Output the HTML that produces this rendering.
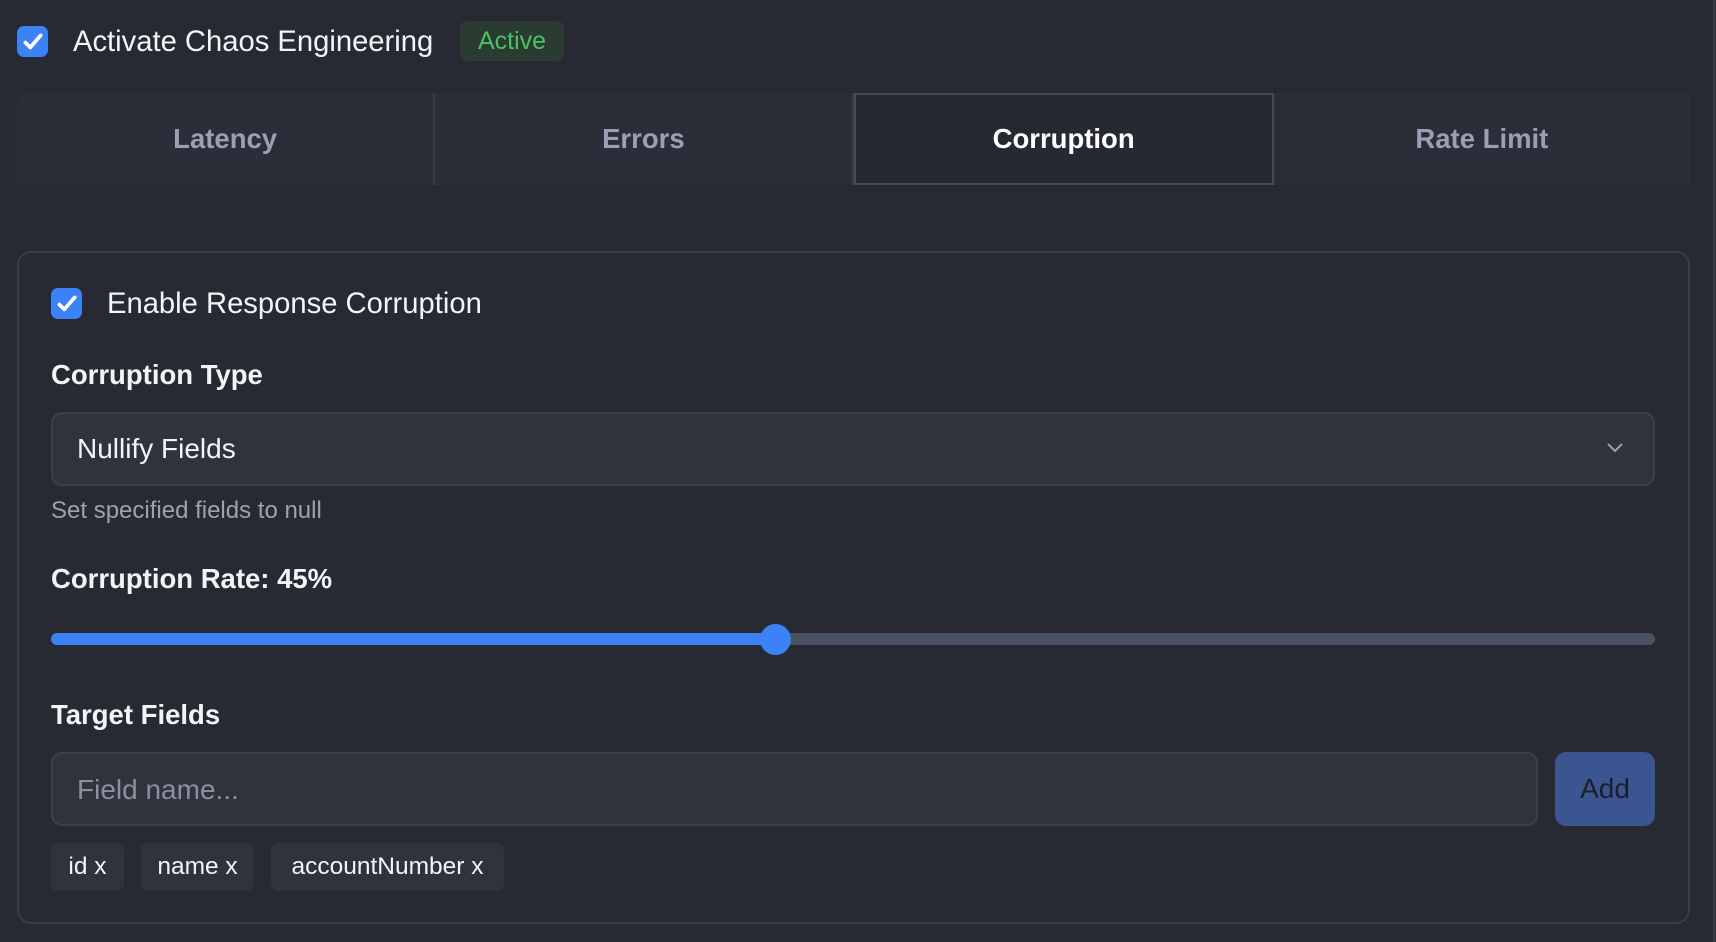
<!DOCTYPE html>
<html><head><style>
*{box-sizing:border-box;margin:0;padding:0}
body{width:1716px;height:942px;background:#272a33;font-family:"Liberation Sans",sans-serif;color:#f3f4f6;position:relative;overflow:hidden}
.abs{position:absolute}
.cb{width:31px;height:31px;border-radius:7px;background:#3b82f6;display:flex;align-items:center;justify-content:center}
.lbl{font-size:27.5px;font-weight:bold;color:#f3f4f6}
.tabs{left:17px;top:93px;width:1673px;height:92px;background:#2b2e38;border-radius:8px 8px 0 0;display:flex}
.tab{flex:1;display:flex;align-items:center;justify-content:center;font-size:27.5px;font-weight:bold;color:#98a1b3;border-right:2px solid #383c48}
.tab:last-child{border-right:none}
.tab.act{background:#262932;border:2px solid #454a58;color:#fff}
.card{left:17px;top:251px;width:1673px;height:673px;border:2px solid #393d49;border-radius:14px}
.field{background:#2f333e;border:2px solid #3c404c;border-radius:11px}
.tag{top:843px;height:48px;background:#2f333e;border-radius:7px;font-size:24.5px;display:flex;align-items:center;justify-content:center;color:#f3f4f6}
</style></head><body>
<div class="abs cb" style="left:17px;top:26px"><svg width="24" height="24" viewBox="0 0 22 22"><path d="M4 11.5l4.5 4.5L18 5" stroke="#fff" stroke-width="3.4" fill="none" stroke-linecap="round" stroke-linejoin="round"/></svg></div>
<div class="abs" style="left:73px;top:25px;font-size:29.2px;line-height:34px;color:#f3f4f6">Activate Chaos Engineering</div>
<div class="abs" style="left:460px;top:21px;width:104px;height:40px;background:#2a3b32;border-radius:7px;color:#4cc063;font-size:25px;display:flex;align-items:center;justify-content:center">Active</div>
<div class="abs tabs"><div class="tab">Latency</div><div class="tab">Errors</div><div class="tab act">Corruption</div><div class="tab">Rate Limit</div></div>
<div class="abs card"></div>
<div class="abs cb" style="left:51px;top:288px"><svg width="24" height="24" viewBox="0 0 22 22"><path d="M4 11.5l4.5 4.5L18 5" stroke="#fff" stroke-width="3.4" fill="none" stroke-linecap="round" stroke-linejoin="round"/></svg></div>
<div class="abs lbl" style="left:107px;top:288px;font-weight:normal;font-size:29.2px">Enable Response Corruption</div>
<div class="abs lbl" style="left:51px;top:359px">Corruption Type</div>
<div class="abs field" style="left:51px;top:412px;width:1604px;height:74px"></div>
<div class="abs" style="left:77px;top:433px;font-size:28px">Nullify Fields</div>
<svg class="abs" style="left:1605px;top:440px" width="20" height="14" viewBox="0 0 20 14"><path d="M3 4l7 7 7-7" stroke="#9aa0ab" stroke-width="2" fill="none"/></svg>
<div class="abs" style="left:51px;top:497px;font-size:24px;color:#9ca3af">Set specified fields to null</div>
<div class="abs lbl" style="left:51px;top:563px">Corruption Rate: 45%</div>
<div class="abs" style="left:51px;top:633px;width:1604px;height:12px;border-radius:6px;background:#4b5262"></div>
<div class="abs" style="left:51px;top:633px;width:724px;height:12px;border-radius:6px;background:#3b82f6"></div>
<div class="abs" style="left:760px;top:624px;width:31px;height:31px;border-radius:50%;background:#3b82f6"></div>
<div class="abs lbl" style="left:51px;top:699px">Target Fields</div>
<div class="abs field" style="left:51px;top:752px;width:1487px;height:74px"></div>
<div class="abs" style="left:77px;top:774px;font-size:28px;color:#8b919c">Field name...</div>
<div class="abs" style="left:1555px;top:752px;width:100px;height:74px;background:#3b5590;border-radius:11px;display:flex;align-items:center;justify-content:center;font-size:28px;color:#1b1f2a">Add</div>
<div class="abs tag" style="left:51px;width:73px">id x</div>
<div class="abs tag" style="left:141px;width:113px">name x</div>
<div class="abs tag" style="left:271px;width:233px">accountNumber x</div>
<div class="abs" style="left:1713px;top:0;width:2px;height:942px;background:#3a3e4a"></div>
</body></html>
